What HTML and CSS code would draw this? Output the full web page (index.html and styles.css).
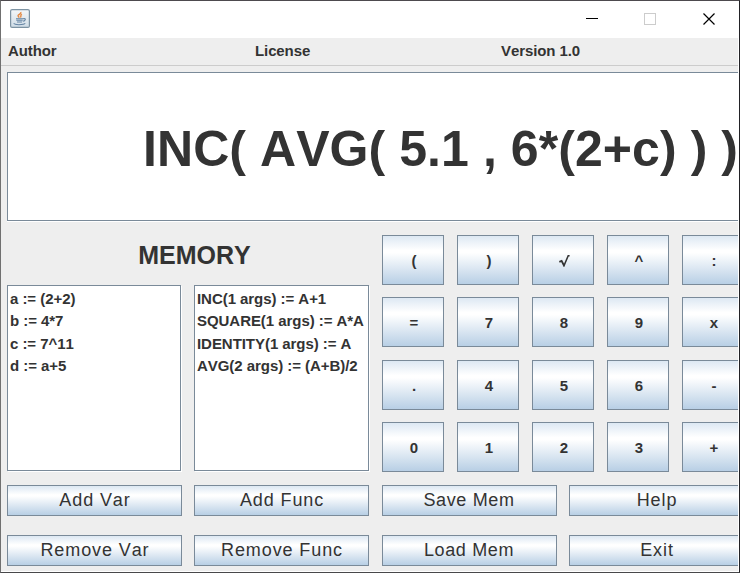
FILE: index.html
```html
<!DOCTYPE html>
<html lang="en">
<head>
<meta charset="utf-8">
<title>Calculator</title>
<link rel="stylesheet" href="styles.css">
</head>
<body>
<div class="window">
  <header class="titlebar">
    <svg class="app-icon" width="20" height="19" viewBox="0 0 20 19">
      <defs><linearGradient id="tile" x2="0" y2="1"><stop stop-color="#f4f7f9"/><stop offset="1" stop-color="#cfdce6"/></linearGradient></defs>
      <rect x=".6" y=".6" width="18.8" height="17.8" rx="1.5" fill="url(#tile)" stroke="#7d93a3" stroke-width="1.2"/>
      <path d="M10.8 3C12 5 7 5.6 8.2 7.2L9.3 8.6M12 5.3C9.5 6.2 11.8 7 10.4 8.4" fill="none" stroke="#e58a45" stroke-width="1.4"/>
      <path d="M6 9.8H13.2M6.3 11.3H12.6M7 13H12M13.2 9.8C16.5 9 15.6 12 12.8 12.3M4 14.2C3.5 16.3 14 16 15.2 14.3" fill="none" stroke="#6484a3" stroke-width="1.1"/>
    </svg>
    <svg class="controls" width="130" height="12" viewBox="0 0 130 12" fill="none" shape-rendering="crispEdges">
      <path d="M0 5.5H12" stroke="#000"/>
      <rect x="58.5" y=".5" width="11" height="11" stroke="#ccc"/>
      <path d="M117.5 .5L128.5 11.5M128.5 .5L117.5 11.5" stroke="#000" shape-rendering="auto" stroke-width="1.2"/>
    </svg>
  </header>
  <nav class="menu"><span>Author</span><span>License</span><span>Version 1.0</span></nav>
  <main class="content">
    <div class="display"><span>INC( AVG( 5.1 , 6*(2+c) ) )</span></div>
    <div class="panels">
      <section class="memory">
        <h1>MEMORY</h1>
        <div class="lists">
          <ul class="list"><li>a := (2+2)</li><li>b := 4*7</li><li>c := 7^11</li><li>d := a+5</li></ul>
          <ul class="list functions"><li>INC(1 args) := A+1</li><li>SQUARE(1 args) := A*A</li><li>IDENTITY(1 args) := A</li><li>AVG(2 args) := (A+B)/2</li></ul>
        </div>
      </section>
      <section class="keypad">
        <button>(</button><button>)</button><button><svg width="11" height="13" viewBox="0 0 11 13" fill="none" stroke="#333"><path d="M.3 6.8L2.6 5.8L5 10.5" stroke-width="1.8"/><path d="M4.6 11.6L9.2 .8H10.6" stroke-width="1.5"/></svg></button><button>^</button><button>:</button>
        <button>=</button><button>7</button><button>8</button><button>9</button><button>x</button>
        <button>.</button><button>4</button><button>5</button><button>6</button><button>-</button>
        <button>0</button><button>1</button><button>2</button><button>3</button><button>+</button>
      </section>
    </div>
    <div class="actions">
      <button>Add Var</button><button>Add Func</button><button>Save Mem</button><button>Help</button>
      <button>Remove Var</button><button>Remove Func</button><button>Load Mem</button><button>Exit</button>
    </div>
  </main>
</div>
</body>
</html>
```
FILE: styles.css
```css
* { box-sizing: border-box; }
body { margin: 0; overflow: hidden; font-family: "Liberation Sans", Arial, sans-serif; color: #333; font-kerning: none; }
.window { width: 740px; height: 573px; border: 1px solid #707070; border-top-color: #4d4a4e; border-right-color: #222226; border-bottom-color: #48484a; background: #eee; overflow: hidden; box-shadow: inset -1px -1px #fff; }
.titlebar { height: 37px; background: #fff; display: flex; justify-content: space-between; padding: 8px 23px 0 9px; }
.controls { margin-top: 4px; }
.menu { height: 28px; width: 737px; border-bottom: 1px solid #ccc; display: grid; grid-template-columns: 247px 246px 1fr; padding-left: 7px; font: bold 15px/26px "Liberation Sans", Arial, sans-serif; font-kerning: none; letter-spacing: -.1px; }
.content { width: 737px; height: 505px; overflow: hidden; padding: 6px 0 0 6px; }
.display { width: 750px; height: 149px; background: #fff; border: 1px solid #7a8a99; padding-left: 135px; font-size: 50px; line-height: 152px; font-weight: bold; letter-spacing: .07px; white-space: pre; box-shadow: 0 1px #fff; }
.panels { display: grid; grid-template-columns: 362px 362px; column-gap: 13px; height: 250px; margin-top: 14px; }
h1 { margin: 0; height: 50px; text-align: center; font-size: 25px; line-height: 41px; padding-left: 13px; }
.lists { display: grid; grid-template-columns: 174px 175px; column-gap: 13px; }
.list { margin: 0; padding: 2px; height: 186px; list-style: none; background: #fff; border: 1px solid #7a8a99; box-shadow: 1px 1px #fff; font-weight: bold; font-size: 15px; line-height: 22.4px; letter-spacing: -.05px; white-space: nowrap; }
button { border: 1px solid #7a8a99; border-radius: 0; padding: 0; color: #333; font-family: inherit; font-kerning: none; background: linear-gradient(#dde8f3 0, #fff 30%, #fff 35%, #b8cfe5 100%); }
.keypad { display: grid; grid-template-columns: repeat(5, 62px); grid-template-rows: repeat(4, 50px); column-gap: 13px; row-gap: 12.4px; }
.keypad button { font-size: 15px; font-weight: bold; line-height: 46px; padding: 2px 0 0 2px; }
.keypad svg { display: block; margin: 0 auto; }
.actions { display: grid; grid-template-columns: 175px 175px 175px 175px; grid-template-rows: 31px 31px; gap: 19px 12px; }
.actions button { font-size: 18px; letter-spacing: .9px; line-height: 29px; padding-left: 1px; }
.actions button:nth-child(4n+3), .actions button:nth-child(4n+4) { position: relative; left: 1px; }
.actions button:nth-child(4n+3) { letter-spacing: .65px; padding: 0 1px 0 0; }
```
